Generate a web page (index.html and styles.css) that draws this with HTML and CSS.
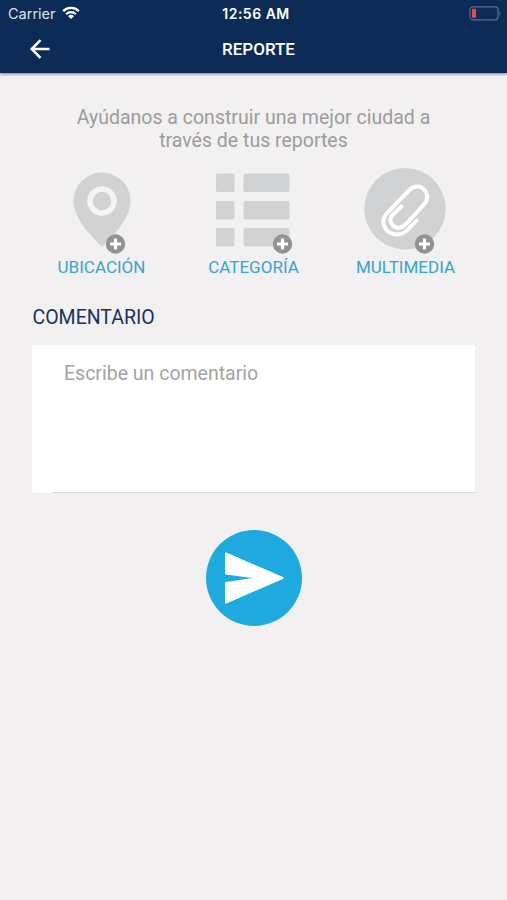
FILE: index.html
```html
<!DOCTYPE html>
<html lang="es">
<head>
<meta charset="utf-8">
<title>Reporte</title>
<link rel="stylesheet" href="styles.css">
</head>
<body>
<header class="header">
  <div class="status">
    <div class="carrier"><span class="carrier-name">Carrier</span>
      <svg class="wifi" width="18" height="14" viewBox="0 0 18 14" fill="none" stroke="#fff" stroke-width="2.3"><path d="M1.2 5.1a11.2 11.2 0 0 1 15.6 0M4.1 8.2a7 7 0 0 1 9.8 0"/><path d="M9 13 6 10.2a4.3 4.3 0 0 1 6 0z" fill="#fff" stroke="none"/></svg>
    </div>
    <span class="time">12:56 AM</span>
    <svg class="battery" width="33" height="15" viewBox="0 0 33 15"><rect x="1" y=".8" width="28" height="13" rx="3" fill="none" stroke="#586c90" stroke-width="1.2"/><rect x="3" y="2.8" width="4" height="9" rx="1" fill="#ec4850"/><path d="M30.5 5q2 2.4 0 4.800z" fill="#65789a"/></svg>
  </div>
  <div class="bar">
    <svg class="back" width="22" height="20" viewBox="0 0 22 20" fill="none" stroke="#fff" stroke-width="2.5"><path d="M20.500 10H3M11.500 1.200 2.700 10l8.800 8.800"/></svg>
    <h1 class="title">REPORTE</h1>
  </div>
</header>
<main class="content">
  <p class="intro">Ayúdanos a construir una mejor ciudad a<br>través de tus reportes</p>
  <div class="actions">
    <div class="action">
      <svg width="100" height="90" viewBox="0 0 100 90"><path d="M50 81.500C43 75 21.500 55 21.500 36a28.500 28.500 0 0 1 57 0C78.500 55 57 75 50 81.500z" fill="#d0d2d3"/><circle cx="50" cy="36" r="12" fill="none" stroke="#f4f4f4" stroke-width="5.500"/><circle cx="63.500" cy="79" r="9.700" fill="#929292"/><path d="M63.500 73.500v11M58 79h11" stroke="#fff" stroke-width="3.200"/></svg>
      <span class="label">UBICACIÓN</span>
    </div>
    <div class="action">
      <svg width="100" height="90" viewBox="0 0 100 90"><g fill="#d0d2d3"><rect x="12" y="8.500" width="18.500" height="18.500" rx="2"/><rect x="39.500" y="8.500" width="46" height="18.500" rx="2"/><rect x="12" y="36" width="18.500" height="18.500" rx="2"/><rect x="39.500" y="36" width="46" height="18.500" rx="2"/><rect x="12" y="63" width="18.500" height="18.500" rx="2"/><rect x="39.500" y="63" width="46" height="18.500" rx="2"/></g><circle cx="78.500" cy="79" r="9.700" fill="#929292"/><path d="M78.500 73.500v11M73 79h11" stroke="#fff" stroke-width="3.200"/></svg>
      <span class="label">CATEGORÍA</span>
    </div>
    <div class="action">
      <svg width="100" height="90" viewBox="0 0 100 90"><circle cx="49" cy="43.700" r="40.700" fill="#d0d2d3"/><path d="M60.500 55.500 52 64.500C45 72 34 70.500 29.500 63.500C26 58 27 52.500 31 48L53 25.500C58 20 65 20.500 69 25.500C72 30 72 35 68 39.500L49.500 59.500C45 64 40 63.500 36.500 60C33.500 56.500 33.500 53 37 49.500L45.500 41.500" fill="none" stroke="#fff" stroke-width="4" stroke-linecap="round"/><circle cx="68.500" cy="79" r="9.700" fill="#929292"/><path d="M68.500 73.500v11M63 79h11" stroke="#fff" stroke-width="3.200"/></svg>
      <span class="label">MULTIMEDIA</span>
    </div>
  </div>
  <h2 class="heading">COMENTARIO</h2>
  <div class="comment"><span class="placeholder">Escribe un comentario</span></div>
  <div class="send">
    <svg width="98" height="98" viewBox="0 0 98 98"><circle cx="49" cy="49" r="48" fill="#1eaadf"/><path d="M21 24.500 77.500 49 21 73.500V54L54 49 21 44.500z" fill="#fff" stroke="#fff" stroke-width="2" stroke-linejoin="round"/></svg>
  </div>
</main>
</body>
</html>
```
FILE: styles.css
```css
* { box-sizing: border-box; }
body { margin: 0; min-height: 900px; background: #f2f0f1; font-family: Roboto, sans-serif; }
.header { height: 73px; background: #0c2c57; color: #fff; box-shadow: 0 1px 3px rgba(12, 44, 87, .6); }
.status { height: 26px; display: grid; grid-template-columns: 1fr auto 1fr; align-items: center; padding: 1px 5px 0 9px; }
.carrier { display: flex; align-items: center; gap: 6px; margin-left: -1px; font: 14.500px/18px Inter, sans-serif; }
.carrier-name { color: #dbe1ec; }
.wifi { margin-bottom: 2px; }
.time { padding-left: 1px; font: 600 14px/18px Inter, sans-serif; letter-spacing: .5px; }
.battery { justify-self: end; margin-bottom: 1px; }
.bar { height: 46px; display: grid; grid-template-columns: 60px 1fr 60px; align-items: center; }
.back { margin-left: 29px; }
.title { margin: 0 0 0 10px; text-align: center; font-size: 17px; line-height: 22px; font-weight: 500; }
.intro { margin: 0; padding-top: 33px; text-align: center; color: #9c9c9c; font-size: 19.500px; line-height: 23px; }
.actions { display: grid; grid-template-columns: repeat(3, 152px); justify-content: center; margin-top: 13px; }
.action { display: flex; flex-direction: column; align-items: center; }
.label { color: #33a5d1; font-size: 17px; line-height: 24px; white-space: nowrap; }
.heading { margin: 27px 0 0 32.500px; color: #17325e; font-size: 19.500px; line-height: 24px; font-weight: 400; }
.comment { margin: 15px 32px 0 32px; height: 148px; padding: 17px 32px; background: linear-gradient(#d9dada, #d9dada) 20px 100% / 100% 1px no-repeat #fff; color: #a3a3a3; font-size: 19.500px; line-height: 23px; }
.send { display: flex; justify-content: center; margin-top: 36px; }
```
